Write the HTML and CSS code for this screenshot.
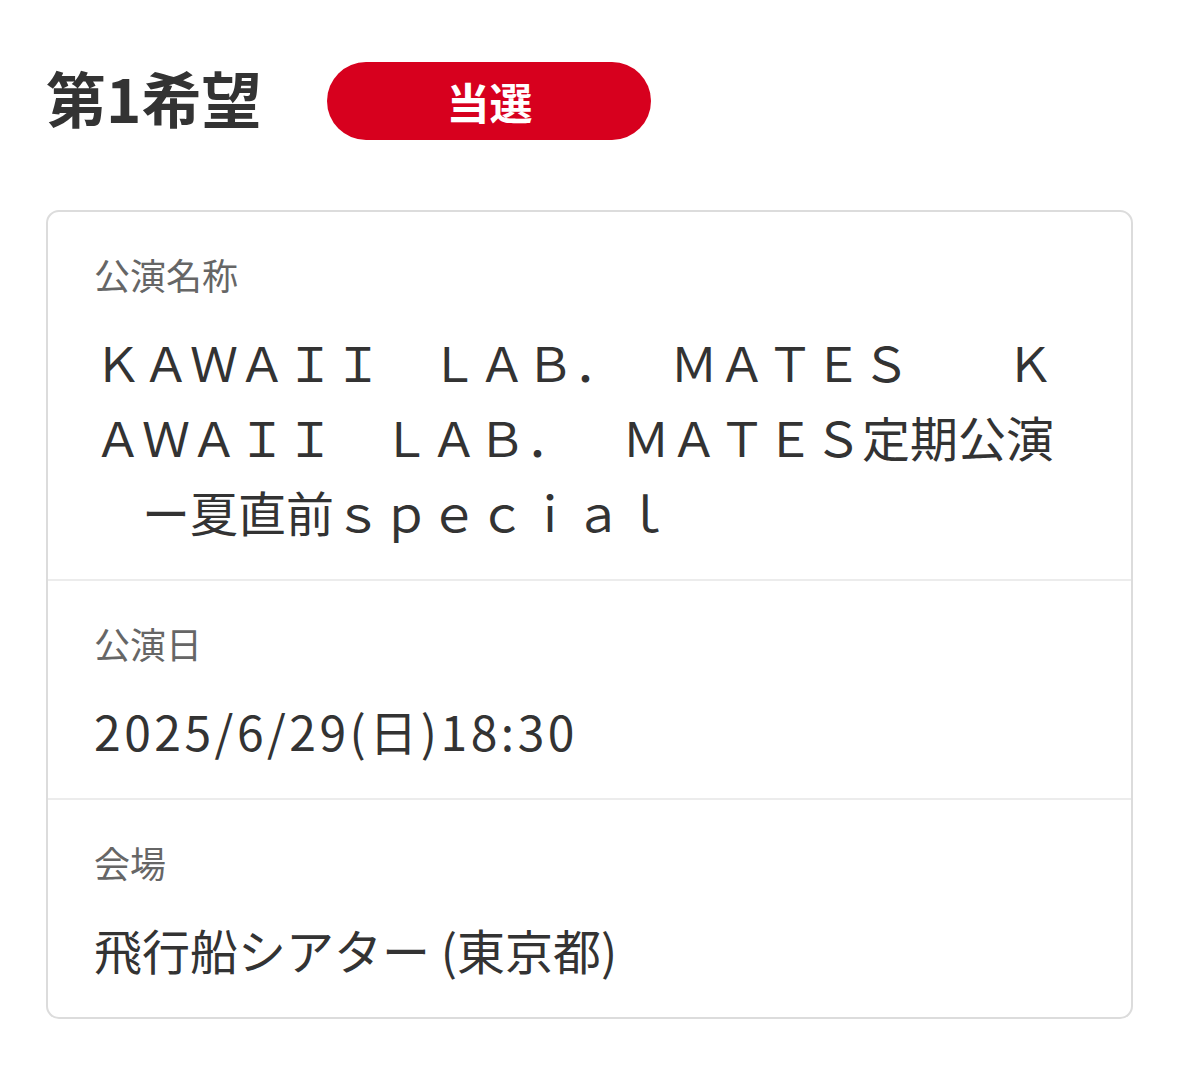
FILE: index.html
```html
<!DOCTYPE html>
<html lang="ja">
<head>
    <meta charset="UTF-8">
    <meta name="viewport" content="width=device-width, initial-scale=1.0">
    <title>第1希望 当選</title>
    <link rel="stylesheet" href="styles.css">
</head>
<body>
    <div class="entry-head">
        <h2 class="entry-title">第1希望</h2>
        <span class="result-badge">当選</span>
    </div>

    <div class="entry-card">
        <div class="entry-row">
            <p class="entry-label">公演名称</p>
            <p class="entry-value">ＫＡＷＡＩＩ　ＬＡＢ．　ＭＡＴＥＳ　　ＫＡＷＡＩＩ　ＬＡＢ．　ＭＡＴＥＳ定期公演<br>　ー夏直前ｓｐｅｃｉａｌ</p>
        </div>
        <div class="entry-row">
            <p class="entry-label">公演日</p>
            <p class="entry-value entry-value--date">2025/6/29(日)18:30</p>
        </div>
        <div class="entry-row">
            <p class="entry-label">会場</p>
            <p class="entry-value">飛行船シアター (東京都)</p>
        </div>
    </div>
</body>
</html>
```

FILE: styles.css
```css
body {
    font-family: "Noto Sans CJK JP", "Noto Sans", sans-serif;
    background-color: #fff;
    color: #333;
    margin: 0;
    padding: 62px 46px 0 46px;
}
.entry-head {
    display: flex;
    align-items: center;
    gap: 66px;
    height: 78px;
    margin-bottom: 70px;
}
.entry-title {
    margin: -10px 0 0 0;
    font-size: 60px;
    font-weight: 700;
    color: #333;
}
.result-badge {
    display: flex;
    align-items: center;
    justify-content: center;
    width: 324px;
    height: 78px;
    border-radius: 39px;
    background-color: #d7001e;
    color: #fff;
    font-size: 43px;
    font-weight: 700;
}
.entry-card {
    border: 2px solid #dcdcdc;
    border-radius: 13px;
}
.entry-row {
    padding: 37px 48px 30px 46px;
    border-bottom: 2px solid #ececec;
}
.entry-row:last-child {
    border-bottom: none;
}
.entry-label {
    margin: 0 0 25px 0;
    font-size: 36px;
    line-height: 50px;
    color: #666;
}
.entry-value {
    margin: 0;
    font-size: 48px;
    line-height: 75px;
    color: #333;
    text-spacing-trim: space-all;
}
.entry-value--date {
    letter-spacing: 3.5px;
}
```
